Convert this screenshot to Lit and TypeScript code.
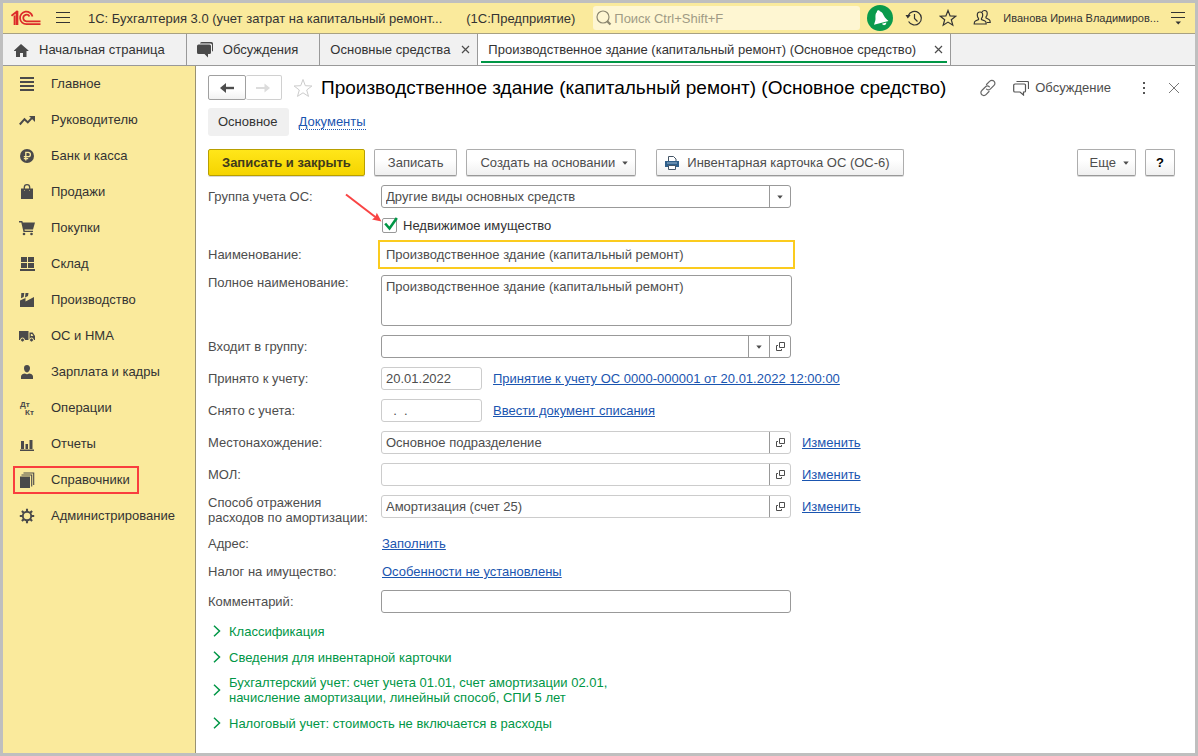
import { LitElement, html, svg, css, nothing, TemplateResult } from "lit";
import { customElement, state } from "lit/decorators.js";
import { classMap } from "lit/directives/class-map.js";

const icon = (size: number, body: unknown) =>
  html`<svg width=${size} height=${size} viewBox="0 0 ${size} ${size}" aria-hidden="true">${body}</svg>`;

const closeMark = svg`<path d="M1 1L8 8M8 1L1 8" stroke="#4d4d4d" stroke-width="1.2" fill="none"/>`;

const menu: { title: string; art: unknown; marked?: boolean }[] = [
  { title: "Главное", art: svg`<path d="M1 1h14v2H1zM1 5h14v2H1zM1 9h14v2H1zM1 13h14v2H1z"/>` },
  { title: "Руководителю", art: svg`<path d="M.8 12.5L5.5 7.2l3.3 3.2L13 5.8" fill="none" stroke="#4a4a4a" stroke-width="2"/><path d="M10 4h6v6z"/>` },
  { title: "Банк и касса", art: svg`<circle cx="8" cy="8" r="7"/><path d="M6.8 12.5V4.3h2.4a2.1 2.1 0 0 1 0 4.4H4.8M4.8 10.6h4.4" fill="none" stroke="#faea9c" stroke-width="1.3"/>` },
  { title: "Продажи", art: svg`<path d="M2 4.5h3v2h1v-2h4v2h1v-2h3V15H2z"/><path d="M5.3 6V3.4a2.7 2.7 0 0 1 5.4 0V6" fill="none" stroke="#4a4a4a" stroke-width="1.3"/>` },
  { title: "Покупки", art: svg`<path d="M0 1h3.3l.5 1.5H16L14 9.5H5.5l.3 1.300H14V12H4.500L2.300 2.400H0z"/><circle cx="5" cy="14" r="1.300"/><circle cx="12.500" cy="14" r="1.300"/>` },
  { title: "Склад", art: svg`<path d="M2 1h6v5H2zM9 1h6v5H9zM2 7h6v5H2zM9 7h6v5H9zM1 13h15v2H1z"/>` },
  { title: "Производство", art: svg`<path d="M1 15V8.500L6.500 6v3.500L15 5v10zM2.300 1h3l-.6 4-2.700 1.200zM6.500 1h3L9 4 6 5.400z"/>` },
  { title: "ОС и НМА", art: svg`<path d="M0 3h9.500v9H0zM10.500 4.500h3.200L16 8v4h-5.500z"/><path d="M11.800 6h1.300l1.300 2h-2.600z" fill="#faea9c"/><circle cx="3.500" cy="12" r="2" stroke="#faea9c"/><circle cx="12.500" cy="12" r="2" stroke="#faea9c"/>` },
  { title: "Зарплата и кадры", art: svg`<path d="M8 1c2 0 3 1.300 3 3.300S9.700 8.500 8 8.500 5 6.500 5 4.300 6 1 8 1zM2 15v-2.500c0-2 2.200-2.800 4-3 1.300 1 2.700 1 4 0 1.800.2 4 1 4 3V15z"/>` },
  { title: "Операции", art: svg`<text x="1" y="7" class="tiny">Дт</text><text x="6" y="15" class="tiny">Кт</text>` },
  { title: "Отчеты", art: svg`<path d="M2 5h3v8H2zM6.500 8h2.500v5H6.500zM10.500 4h3v9h-3zM1 13.500h14V15H1z"/>` },
  { title: "Справочники", art: svg`<path d="M1 4.500h10V16H1z"/><path d="M2.500 3h10.200V14.500M4.500 1h10.200V13" fill="none" stroke="#4a4a4a" stroke-width="1.100"/>`, marked: true },
  { title: "Администрирование", art: svg`<circle cx="8" cy="8" r="4.200" fill="none" stroke="#4a4a4a" stroke-width="1.900"/><path d="M8 .8v3M8 12.200v3M.8 8h3M12.200 8h3M2.900 2.900l2.100 2.100M11 11l2.100 2.100M2.900 13.100L5 11M11 5l2.100-2.100" stroke="#4a4a4a" stroke-width="2.100"/>` },
];

const openArt = html`<svg width="11" height="11" viewBox="0 0 11 11" aria-hidden="true"><path d="M4.500 1.500h5v5h-5zM3 4.500H1.500v5h5V8" fill="none" stroke="#4d4d4d"/></svg>`;
const caret = html`<svg width="6" height="5" viewBox="0 0 6 5" aria-hidden="true"><path d="M.3 1.500h5.400L3.300 4.500h-.6z" fill="#4d4d4d"/></svg>`;

@customElement("app-root")
export class AppRoot extends LitElement {
  @state() private realEstate = true;

  static styles = css`
    :host {
      display: block;
      font: 13px/15px "Liberation Sans", Arial, sans-serif;
      color: #4d4d4d;
    }
    * { box-sizing: border-box; }
    svg { display: block; flex: none; }
    button, input, select, textarea { font: inherit; color: inherit; margin: 0; }
    button { cursor: pointer; padding: 0; }
    a { color: #1a55b0; }
    ul { list-style: none; margin: 0; padding: 0; }
    .window {
      min-height: 100vh;
      border: 3px solid #bfbfbf;
      display: grid;
      grid-template-rows: 31px 32px 1fr;
      background: #fff;
    }
    .plain { border: 0; background: none; }

    .top {
      display: flex;
      align-items: center;
      background: #faea9c;
      border-bottom: 1px solid #a8a182;
      padding: 0 10px 0 8px;
      color: #333;
    }
    .burger { margin-left: 15px; }
    .app-name { display: flex; gap: 24px; margin: 0 18px; white-space: nowrap; }
    .search {
      flex: 1;
      min-width: 100px;
      height: 24px;
      display: flex;
      align-items: center;
      gap: 2px;
      padding-left: 3px;
      background: #fef6d2;
      border-radius: 3px;
    }
    .search input { flex: 1; min-width: 0; border: 0; background: none; outline: none; padding: 0; }
    .search input::placeholder { color: #a09b85; opacity: 1; }
    .bell { margin: 0 12px 0 7px; }
    .tools { display: flex; gap: 16px; }
    .user { margin: 0 12px; font-size: 11px; }

    .tabs { display: flex; background: #f1f1f1; border-bottom: 1px solid #999; color: #333; }
    .tab {
      display: flex;
      align-items: center;
      gap: 10px;
      padding: 0 21px 0 10px;
      border-right: 1px solid #999;
      white-space: nowrap;
    }
    .tab.closable { gap: 8px; padding-right: 7px; min-width: 158px; justify-content: space-between; }
    .tab.active {
      min-width: 473px;
      background: linear-gradient(#009646, #009646) 3px 27px / calc(100% - 6px) 2px no-repeat #fff;
    }

    .body { display: grid; grid-template-columns: 193px 1fr; }
    .side { background: #faea9c; border-right: 1px solid #999272; }
    .side li { height: 36px; display: flex; align-items: center; padding-left: 10px; }
    .side a {
      display: flex;
      align-items: center;
      gap: 16px;
      height: 28px;
      padding: 0 7px 0 4px;
      border: 2px solid transparent;
      color: #333;
      fill: #4a4a4a;
      text-decoration: none;
      white-space: nowrap;
    }
    .side a.marked { border-color: #f93e3e; }
    .side span { padding-bottom: 2px; }
    .tiny { font: bold 8px "Liberation Sans", Arial, sans-serif; }

    main { padding: 9px 20px 20px 12px; }
    .head { display: flex; align-items: center; height: 25px; }
    .nav { display: flex; width: 74px; height: 25px; }
    .nav button {
      flex: 1;
      display: grid;
      place-items: center;
      border: 1px solid #a0a0a0;
      border-radius: 2px;
      background: linear-gradient(#fff 60%, #f2f2f2);
    }
    .nav button:disabled { border-color: #d0d0d0; border-left: 0; background: #fff; }
    .fav { margin: 0 8px 0 11px; }
    h1 { margin: 0; font-size: 19px; line-height: 24px; font-weight: 400; color: #000; white-space: nowrap; }
    .actions { display: flex; align-items: center; margin-left: auto; margin-right: -5px; }
    .talk { display: flex; align-items: center; gap: 6px; margin: 0 25px 0 16px; }
    .sections { display: flex; align-items: center; gap: 10px; margin-top: 8px; height: 28px; }
    .sections a { text-decoration: none; border-bottom: 1px dotted #1a55b0; }
    .sections a.current { padding: 6px 11px 7px 10px; border: 0; border-radius: 3px; background: #f0f0f0; color: #333; }

    .commands { display: flex; gap: 9px; margin-top: 13px; }
    .btn {
      display: flex;
      align-items: center;
      justify-content: center;
      gap: 7px;
      height: 27px;
      padding: 0 13px;
      border: 1px solid #adadad;
      border-bottom-color: #999;
      border-radius: 2px;
      background: linear-gradient(#fff 40%, #f0f0f0);
      box-shadow: 0 1px 0 #d8d8d8;
      white-space: nowrap;
    }
    .btn.main {
      font-weight: 700;
      color: #403a1c;
      border-color: #b89f00;
      background: linear-gradient(#ffe61a, #f5d400);
    }
    .btn.print { margin-left: 11px; padding-left: 7px; }
    .btn.more { margin-left: auto; padding: 0 6px 0 12px; }
    .btn.list { padding-right: 7px; }
    .btn.help { width: 30px; padding: 0; color: #000; font-weight: 700; }

    form { display: grid; gap: 9px; margin-top: 9px; }
    .row { display: grid; grid-template-columns: 164px 1fr; column-gap: 9px; }
    .row > label, .row > .label { line-height: 23px; }
    .row.short > .label { line-height: 19px; }
    .row.short > div { line-height: 19px; padding-left: 1px; }
    .row > label.two { line-height: 15px; white-space: nowrap; }
    .line { display: flex; gap: 11px; align-items: center; height: 23px; }
    .box {
      width: 410px;
      height: 23px;
      display: grid;
      grid-template-columns: 1fr auto;
      border: 1px solid #999;
      border-radius: 3px;
      background: #fff;
    }
    .box.locked { border-color: #ccc; }
    .box.date { width: 101px; }
    .box.focus { width: 411px; outline: 2px solid #fbcb1e; outline-offset: 1px; border-color: transparent; border-radius: 0; }
    .box input, .box select, textarea {
      min-width: 0;
      width: 100%;
      border: 0;
      background: none;
      outline: none;
      padding: 0 4px;
      appearance: none;
    }
    .pick { display: grid; grid-template-columns: 1fr 21px; }
    .pick select { grid-area: 1 / 1 / 2 / 3; }
    .pick span { grid-area: 1 / 2 / 2 / 3; display: grid; place-items: center; border-left: 1px solid #999; pointer-events: none; }
    .open { width: 21px; border: 0; border-left: 1px solid #999; background: none; display: grid; place-items: center; }
    textarea {
      display: block;
      width: 411px;
      height: 51px;
      border: 1px solid #999;
      border-radius: 3px;
      padding: 3px 4px;
      resize: none;
    }
    .check { position: relative; display: flex; align-items: center; gap: 5px; height: 17px; color: #333; }
    .tick { display: grid; width: 16px; margin-left: 1px; }
    .tick input, .tick svg { grid-area: 1 / 1; }
    .tick input { width: 15px; height: 15px; align-self: center; appearance: none; border: 1px solid #999; border-radius: 2px; background: #fff; }
    .tick svg { pointer-events: none; }
    .arrow { position: absolute; left: -36px; top: -24px; pointer-events: none; }

    .groups { display: grid; gap: 10px; margin-top: 10px; }
    .groups button {
      display: flex;
      align-items: center;
      gap: 8px;
      min-height: 16px;
      padding-left: 5px;
      color: #009646;
      text-align: left;
    }
  `;

  private opener(label: string) {
    return html`<button type="button" class="open" aria-label=${`Открыть: ${label}`}>${openArt}</button>`;
  }

  private reference(id: string, label: TemplateResult | string, name: string, value: string, two = false) {
    return html`<div class="row">
      <label for=${id} class=${classMap({ two })}>${label}</label>
      <div class="line">
        <div class="box locked"><input id=${id} .value=${value} />${this.opener(name)}</div>
        <a href="#">Изменить</a>
      </div>
    </div>`;
  }

  private date(id: string, label: string, value: string, link: string) {
    return html`<div class="row">
      <label for=${id}>${label}</label>
      <div class="line">
        <div class="box locked date"><input id=${id} .value=${value} /></div>
        <a href="#">${link}</a>
      </div>
    </div>`;
  }

  private group(text: TemplateResult | string) {
    return html`<button type="button" class="plain">
      <svg width="8" height="12" viewBox="0 0 8 12" aria-hidden="true"><path d="M1 .8L6.500 6 1 11.200" fill="none" stroke="#009646" stroke-width="1.500" /></svg>
      <span>${text}</span>
    </button>`;
  }

  private renderTop() {
    return html`<header class="top">
      <svg width="30" height="16" viewBox="0 0 30 16" role="img" aria-label="1С">
        <g fill="none" stroke="#dc2a2a" stroke-width="1.700">
          <path d="M.5 5.800L5.500 1.800V15M3.500 5.500V15M6.500 1V15" />
          <path d="M21.500 6.500A6.300 6.300 0 1 0 15.500 14.200H29.500" />
          <path d="M18.500 6.500A3.300 3.300 0 1 0 15.500 11.300H29.500" />
        </g>
      </svg>
      <button class="plain burger" aria-label="Меню">${icon(14, svg`<path d="M0 1.500h14M0 6.500h14M0 11.500h14" stroke="#333"/>`)}</button>
      <div class="app-name"><span>1С: Бухгалтерия 3.0 (учет затрат на капитальный ремонт...</span><span>(1С:Предприятие)</span></div>
      <label class="search">
        ${icon(16, svg`<circle cx="7" cy="7" r="6" fill="none" stroke="#8c8770" stroke-width="1.200"/><path d="M11.200 11.200L14.500 14.500" stroke="#8c8770" stroke-width="2.200"/>`)}
        <input type="search" placeholder="Поиск Ctrl+Shift+F" aria-label="Поиск" />
      </label>
      <button class="plain bell" aria-label="Уведомления">
        ${icon(26, svg`<circle cx="13" cy="13" r="13" fill="#0a9a4c"/><g fill="#fff" transform="rotate(-14 13 13)"><path d="M13 5c.9 0 1.500.6 1.500 1.400 2 1 2.500 3.500 3 6 .4 2 1.500 3.300 3 5.600H5.500c1.500-2.300 2.600-3.600 3-5.600.5-2.500 1-5 3-6C11.500 5.600 12.100 5 13 5z"/><path d="M13.500 19h4.500c-.3 1.300-1.200 2-2.200 2s-2-.8-2.300-2z"/></g>`)}
      </button>
      <div class="tools">
        <button class="plain" aria-label="История">${icon(18, svg`<g fill="none" stroke="#333" stroke-width="1.200"><path d="M3.300 6.500A6.800 6.800 0 1 1 3.600 12.500"/><path d="M9.500 5v4.500l3 3"/></g><path d="M.5 6h5.200L2.800 9.500z" fill="#333"/>`)}</button>
        <button class="plain" aria-label="Избранное">${icon(18, svg`<path d="M9 1.500l2.100 5.400 5.600.3-4.400 3.500 1.500 5.500L9 13.100l-4.800 3.100 1.500-5.500L1.300 7.200l5.600-.3z" fill="none" stroke="#333" stroke-width="1.200"/>`)}</button>
        <button class="plain" aria-label="Пользователи">${icon(18, svg`<g fill="none" stroke="#333" stroke-width="1.200"><path d="M7 3c2 0 2.800 1.400 2.700 3.200 0 1.500-.6 2.500-1.200 3.100v1.200l3.500 1.500c1 .5 1.200 1.300 1.200 3H1.200c0-1.700.2-2.500 1.200-3l3.100-1.500V9.300C4.900 8.700 4.300 7.700 4.300 6.200 4.200 4.400 5 3 7 3z"/><path d="M9 3c.5-1 1.300-1.500 2.500-1.500 2 0 2.800 1.400 2.700 3.200 0 1.500-.6 2.500-1.200 3.100V9l3 1.500c1 .5 1.200 1.300 1.200 3h-3.500"/></g>`)}</button>
      </div>
      <span class="user">Иванова Ирина Владимиров...</span>
      <button class="plain" aria-label="Сервис">${icon(14, svg`<path d="M0 1.500h14M0 6.500h14" stroke="#333"/><path d="M4.500 10.500h5.500L7.300 13.500z" fill="#333"/>`)}</button>
    </header>`;
  }

  private renderTabs() {
    return html`<nav class="tabs">
      <div class="tab">${icon(16, svg`<path d="M8 2L1 8.500V9h2v6h4v-4h3v4h3.500V9H15.500v-.5z" fill="#4a4a4a"/>`)}<span>Начальная страница</span></div>
      <div class="tab">${icon(16, svg`<path d="M4.500 0h10Q16 0 16 1.500v7q0 1-1 1V3Q15 1.500 13.500 1.500H3Q3.200 0 4.500 0z" fill="#4a4a4a"/><path d="M1.500 2.500h11Q14 2.500 14 4v6.500Q14 12 12.500 12H11v3.500L7.500 12h-6Q0 12 0 10.500V4Q0 2.500 1.500 2.500z" fill="#4a4a4a"/>`)}<span>Обсуждения</span></div>
      <div class="tab closable"><span>Основные средства</span><button class="plain" aria-label="Закрыть">${icon(9, closeMark)}</button></div>
      <div class="tab closable active"><span>Производственное здание (капитальный ремонт) (Основное средство)</span><button class="plain" aria-label="Закрыть">${icon(9, closeMark)}</button></div>
    </nav>`;
  }

  private renderHead() {
    return html`<div class="head">
        <div class="nav">
          <button aria-label="Назад">${icon(16, svg`<path d="M15 8H6" stroke="#4d4d4d" stroke-width="2.400"/><path d="M1 8l6-5v10z" fill="#4d4d4d"/>`)}</button>
          <button disabled aria-label="Вперед">${icon(16, svg`<path d="M1 8H10" stroke="#dcdcdc" stroke-width="2"/><path d="M15 8L9.500 3.500v9z" fill="#dcdcdc"/>`)}</button>
        </div>
        <button class="plain fav" aria-label="В избранное">${icon(20, svg`<path d="M10 1.500l2.300 6.200 6.600.3-5.200 4 1.800 6.400L10 14.800l-5.500 3.600L6.300 12 1.100 8l6.600-.3z" fill="none" stroke="#ccc"/>`)}</button>
        <h1>Производственное здание (капитальный ремонт) (Основное средство)</h1>
        <div class="actions">
          <button class="plain" aria-label="Ссылка">${icon(18, svg`<g fill="none" stroke="#666" stroke-width="1.200" stroke-linecap="round"><path d="M7.500 5.500L10.800 2.200a2.900 2.900 0 0 1 4.200 0 2.900 2.900 0 0 1 0 4.200L11.500 9.900a2.900 2.900 0 0 1-4 .2"/><path d="M10 12.500l-3 3.200a2.900 2.900 0 0 1-4.200 0 2.900 2.900 0 0 1 0-4.200L6.300 8a2.900 2.900 0 0 1 4-.2"/></g>`)}</button>
          <button class="plain talk">${icon(16, svg`<g fill="none" stroke="#555" stroke-width="1.200"><path d="M2 4h9.500q1 0 1 1v6q0 1-1 1H10.500v3L7 12H2Q.7 12 .7 11V5Q.7 4 2 4z"/><path d="M3.500 1.500H14.500q1 0 1 1V9"/></g>`)}<span>Обсуждение</span></button>
          <button class="plain" aria-label="Еще">${icon(16, svg`<path d="M7 2h2v2H7zM7 7h2v2H7zM7 12h2v2H7z" fill="#555"/>`)}</button>
          <button class="plain" aria-label="Закрыть форму">
            <svg width="28" height="12" viewBox="0 0 28 12"><path d="M17 1l10 10M27 1L17 11" stroke="#777" /></svg>
          </button>
        </div>
      </div>
      <nav class="sections"><a href="#" class="current">Основное</a><a href="#">Документы</a></nav>
      <div class="commands">
        <button class="btn main">Записать и закрыть</button>
        <button class="btn">Записать</button>
        <button class="btn list">Создать на основании ${caret}</button>
        <button class="btn print">${icon(16, svg`<path d="M4.500 6V1.500h5L12 4v2" fill="#fff" stroke="#456" /><path d="M1 6h14v6H1z" fill="#2f5f8a"/><path d="M3 8h10" stroke="#9cb8d0"/><path d="M4.500 10.500h7v4h-7z" fill="#fff" stroke="#456"/>`)}Инвентарная карточка ОС (ОС-6)</button>
        <button class="btn more">Еще ${caret}</button>
        <button class="btn help">?</button>
      </div>`;
  }

  private renderForm() {
    return html`<form @submit=${(e: Event) => e.preventDefault()}>
      <div class="row">
        <label for="kind">Группа учета ОС:</label>
        <div class="box"><div class="pick"><select id="kind"><option>Другие виды основных средств</option></select><span>${caret}</span></div></div>
      </div>
      <div class="row">
        <span></span>
        <label class="check">
          <svg class="arrow" width="37" height="30" viewBox="0 0 37 30" aria-hidden="true"><path d="M1 1.500L31 24.500" stroke="#f94444" stroke-width="2" /><path d="M36.500 28.500l-9.500-2 3.300-2.500 1.500-4.200z" fill="#f94444" /></svg>
          <span class="tick">
            <input type="checkbox" .checked=${this.realEstate} @change=${(e: Event) => (this.realEstate = (e.target as HTMLInputElement).checked)} />
            ${this.realEstate ? html`<svg width="16" height="17" viewBox="0 0 16 17"><path d="M3.200 6.500l4.300 5L14.800 1" fill="none" stroke="#009646" stroke-width="2.600" /></svg>` : nothing}
          </span>
          <span>Недвижимое имущество</span>
        </label>
      </div>
      <div class="row">
        <label for="name">Наименование:</label>
        <div class="box focus"><input id="name" .value=${"Производственное здание (капитальный ремонт)"} /></div>
      </div>
      <div class="row">
        <label for="full" class="two">Полное наименование:</label>
        <textarea id="full" .value=${"Производственное здание (капитальный ремонт)"}></textarea>
      </div>
      <div class="row">
        <label for="parent">Входит в группу:</label>
        <div class="box"><div class="pick"><select id="parent"><option></option></select><span>${caret}</span></div>${this.opener("Входит в группу")}</div>
      </div>
      ${this.date("in", "Принято к учету:", "20.01.2022", "Принятие к учету ОС 0000-000001 от 20.01.2022 12:00:00")}
      ${this.date("out", "Снято с учета:", "  .  .", "Ввести документ списания")}
      ${this.reference("place", "Местонахождение:", "Местонахождение", "Основное подразделение")}
      ${this.reference("mol", "МОЛ:", "МОЛ", "")}
      ${this.reference("way", html`Способ отражения<br />расходов по амортизации:`, "Способ отражения расходов", "Амортизация (счет 25)", true)}
      <div class="row short"><span class="label">Адрес:</span><div><a href="#">Заполнить</a></div></div>
      <div class="row short"><span class="label">Налог на имущество:</span><div><a href="#">Особенности не установлены</a></div></div>
      <div class="row">
        <label for="note">Комментарий:</label>
        <div class="box"><input id="note" /></div>
      </div>
    </form>
    <div class="groups">
      ${this.group("Классификация")}
      ${this.group("Сведения для инвентарной карточки")}
      ${this.group(html`Бухгалтерский учет: счет учета 01.01, счет амортизации 02.01,<br />начисление амортизации, линейный способ, СПИ 5 лет`)}
      ${this.group("Налоговый учет: стоимость не включается в расходы")}
    </div>`;
  }

  render() {
    return html`<div class="window">
      ${this.renderTop()} ${this.renderTabs()}
      <div class="body">
        <nav class="side">
          <ul>
            ${menu.map((m) => html`<li><a href="#" class=${classMap({ marked: !!m.marked })}>${icon(16, m.art)}<span>${m.title}</span></a></li>`)}
          </ul>
        </nav>
        <main>${this.renderHead()} ${this.renderForm()}</main>
      </div>
    </div>`;
  }
}
